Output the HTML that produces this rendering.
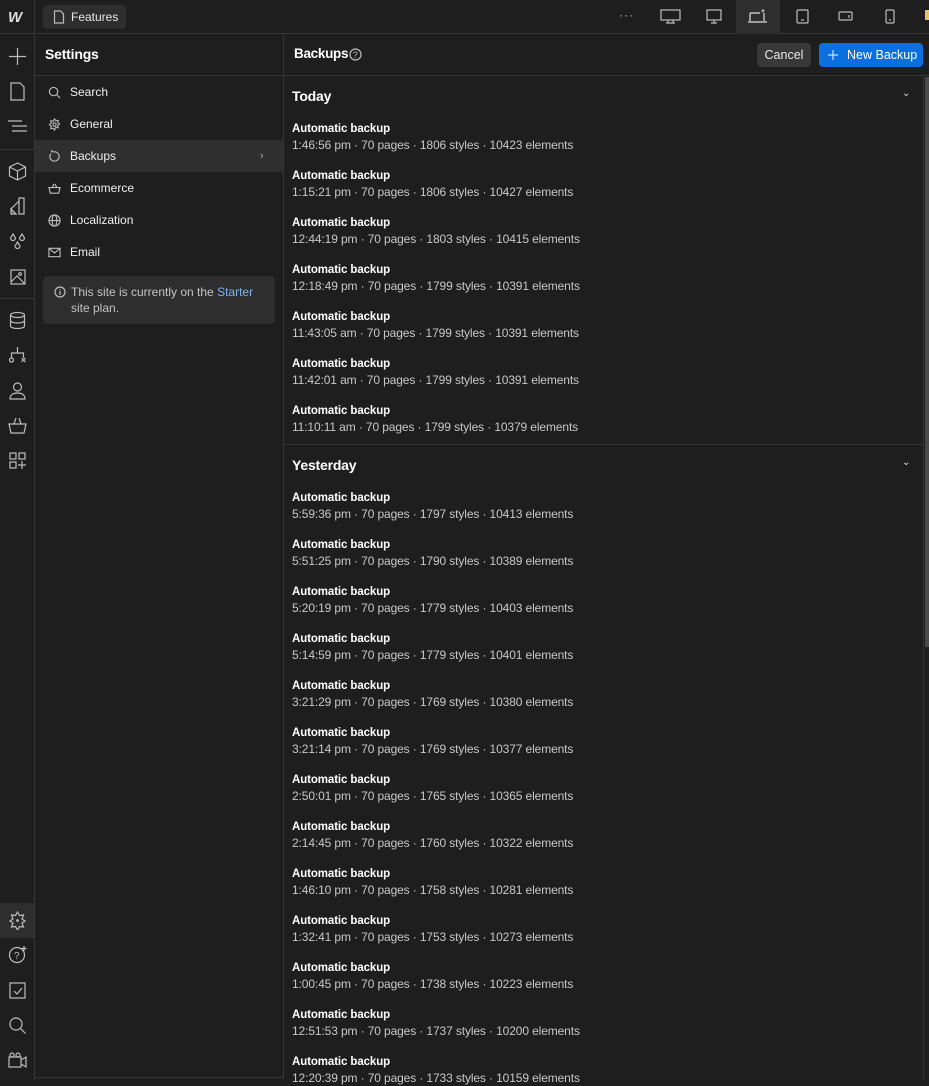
<!DOCTYPE html>
<html><head><meta charset="utf-8"><style>
*{box-sizing:border-box;margin:0;padding:0}
body{width:929px;height:1080px;background:#1e1e1e;font-family:"Liberation Sans",sans-serif;color:#f0f0f0;position:relative;overflow:hidden;font-size:12px}
.abs{position:absolute}
.top{left:0;top:0;width:929px;height:34px;background:#1e1e1e;border-bottom:1px solid #363636}
.rail{left:0;top:35px;width:35px;height:1045px;border-right:1px solid #363636}
.panel{left:35px;top:35px;width:249px;height:1045px;border-right:1px solid #363636}
.nav{position:absolute;left:0;width:248px;height:32px;display:flex;align-items:center;padding-left:13px;font-size:12px;color:#f0f0f0}
.nav svg{width:13px;height:13px;margin-right:9px}
.item{position:absolute;left:292px;line-height:16px}
.item b{display:block;font-size:11.5px;color:#fff;letter-spacing:-0.1px}
.item span{display:block;font-size:12px;color:#c8c8c8;letter-spacing:-0.12px}
svg{stroke:#bdbdbd;fill:none;stroke-width:1.2}
.ri{position:absolute;left:8px;width:19px;height:19px}
</style></head><body>
<div class="abs top">
  <div class="abs" style="left:8px;top:9px;font:italic 900 15px 'Liberation Sans';color:#ddd;letter-spacing:-2px">W</div>
  <div class="abs" style="left:43px;top:5px;width:83px;height:24px;background:#2e2e2e;border-radius:4px;font-size:12px;line-height:24px;padding-left:28px;color:#e8e8e8">Features
    <svg class="abs" style="left:10px;top:5px;width:12px;height:14px" viewBox="0 0 12 14"><path d="M1.5 1h6l3 3v9h-9z"/></svg></div>
  <div class="abs" style="left:619px;top:8px;color:#bbb;font-size:12px;letter-spacing:1px">···</div>
  <svg class="abs" style="left:660px;top:9px;width:22px;height:16px" viewBox="0 0 22 16"><rect x="1" y="1" width="19" height="10"/><path d="M8 11v3M13 11v3M6 14h9"/></svg>
  <svg class="abs" style="left:706px;top:9px;width:16px;height:16px" viewBox="0 0 16 16"><rect x="1" y="1" width="14" height="10"/><path d="M8 11v3M5 14h6"/></svg>
  <div class="abs" style="left:736px;top:0;width:44px;height:34px;background:#2e2e2e"></div>
  <svg class="abs" style="left:746px;top:8px;width:24px;height:16px" viewBox="0 0 24 16"><path d="M4 5v8M4 5h10M2 14h19M18 5v8" stroke="#ddd"/><text x="15" y="8" fill="#ddd" stroke="none" font-size="10" font-family="Liberation Sans">*</text></svg>
  <svg class="abs" style="left:796px;top:9px;width:14px;height:16px" viewBox="0 0 14 16"><rect x="1" y="1" width="11" height="13" rx="1"/><path d="M5 11h3"/></svg>
  <svg class="abs" style="left:838px;top:11px;width:16px;height:12px" viewBox="0 0 16 12"><rect x="1" y="1" width="13" height="8" rx="1"/><path d="M11 4v3"/></svg>
  <svg class="abs" style="left:885px;top:9px;width:11px;height:16px" viewBox="0 0 11 16"><rect x="1" y="1" width="8" height="13" rx="1"/><path d="M4 11h2"/></svg>
  <div class="abs" style="left:925px;top:10px;width:4px;height:10px;background:#e8c06a"></div>
</div>
<div class="abs" style="left:34px;top:0;width:1px;height:34px;background:#363636"></div>
<div class="abs rail">
  <svg class="ri" style="top:12px" viewBox="0 0 19 19"><path d="M9.5 1v17M1 9.5h17"/></svg>
  <svg class="ri" style="top:47px" viewBox="0 0 19 19"><path d="M3 1h9l4 4v13H3z"/></svg>
  <svg class="ri" style="top:82px" viewBox="0 0 19 19"><path d="M0 4h14M4 9h15M4 14h15"/></svg>
  <div class="abs" style="left:0;top:114px;width:34px;height:1px;background:#363636"></div>
  <svg class="ri" style="top:127px" viewBox="0 0 19 19"><path d="M9.5 1l8 4v9l-8 4-8-4V5zM1.5 5l8 4 8-4M9.5 9v9"/></svg>
  <svg class="ri" style="top:162px" viewBox="0 0 19 19"><path d="M11 1h5v16h-5zM11 4L3 12l5 5"/><path d="M3 12l5 5H3z" fill="#555"/></svg>
  <svg class="ri" style="top:197px" viewBox="0 0 19 19"><path d="M5 2l2.5 4a2.5 2.5 0 1 1-5 0zM14 2l2.5 4a2.5 2.5 0 1 1-5 0zM9.5 10l2.5 4a2.5 2.5 0 1 1-5 0z"/></svg>
  <svg class="ri" style="top:232px" viewBox="0 0 19 19"><rect x="3" y="3" width="14" height="14"/><path d="M3 15l6-6 8 8"/><circle cx="12" cy="7" r="1.3"/></svg>
  <div class="abs" style="left:0;top:263px;width:34px;height:1px;background:#363636"></div>
  <svg class="ri" style="top:276px" viewBox="0 0 19 19"><ellipse cx="9.5" cy="4" rx="7" ry="2.5"/><path d="M2.5 4v11c0 1.5 3 2.5 7 2.5s7-1 7-2.5V4M2.5 9.5c0 1.5 3 2.5 7 2.5s7-1 7-2.5"/></svg>
  <svg class="ri" style="top:311px" viewBox="0 0 19 19"><path d="M9.5 1v6M3.5 12V7h12v5M13.5 12l4 4M17.5 12l-4 4"/><circle cx="3.5" cy="14" r="2"/></svg>
  <svg class="ri" style="top:346px" viewBox="0 0 19 19"><circle cx="9.5" cy="6" r="4"/><path d="M2 18c0-4 3-6 7.5-6s7.5 2 7.5 6z"/></svg>
  <svg class="ri" style="top:381px" viewBox="0 0 19 19"><path d="M1 8h17l-2 9H3zM6 8l2-6M13 8l-2-6"/></svg>
  <svg class="ri" style="top:416px" viewBox="0 0 19 19"><rect x="2" y="2" width="6" height="6"/><rect x="11" y="2" width="6" height="6"/><rect x="2" y="11" width="6" height="6"/><path d="M14 10v8M10 14h8"/></svg>
  <div class="abs" style="left:0;top:868px;width:34px;height:35px;background:#2e2e2e"></div>
  <svg class="ri" style="top:876px" viewBox="0 0 19 19"><path d="M9.5 1l2 3.5 4-.5-1.5 4 3 2-3 2 1.5 4-4-.5-2 3.5-2-3.5-4 .5 1.5-4-3-2 3-2L3.5 4l4 .5z"/><circle cx="9.5" cy="9.5" r=".8" fill="#bbb"/></svg>
  <svg class="ri" style="top:910px" viewBox="0 0 19 19"><circle cx="9" cy="10" r="7.5"/><text x="6" y="14" font-size="10" fill="#bbb" stroke="none" font-family="Liberation Sans">?</text><path d="M16 1v5M13.5 3.5h5"/></svg>
  <svg class="ri" style="top:946px" viewBox="0 0 19 19"><rect x="2" y="2" width="15" height="15"/><path d="M6 10l3 3 5-6"/></svg>
  <svg class="ri" style="top:981px" viewBox="0 0 19 19"><circle cx="8" cy="8" r="6"/><path d="M12.5 12.5l5 5"/></svg>
  <svg class="ri" style="top:1016px" viewBox="0 0 19 19"><rect x="1" y="6" width="12" height="10"/><path d="M13 9l5-3v10l-5-3"/><circle cx="4" cy="4" r="2"/><circle cx="10" cy="4" r="2"/></svg>
</div>
<div class="abs panel">
  <div class="abs" style="left:10px;top:11px;font-size:14px;font-weight:bold;color:#fff;letter-spacing:-0.2px">Settings</div>
  <div class="abs" style="left:0;top:40px;width:248px;height:1px;background:#363636"></div>
  <div class="nav" style="top:41px"><svg viewBox="0 0 14 14"><circle cx="6" cy="6" r="4.5"/><path d="M9.5 9.5l3.5 3.5"/></svg>Search</div>
  <div class="nav" style="top:73px"><svg viewBox="0 0 14 14"><path d="M7 1l1.5 2 2.5-.5-.5 2.5 2 1.5-2 1.5.5 2.5-2.5-.5L7 13l-1.5-2-2.5.5.5-2.5L1.5 7l2-1.5L3 3l2.5.5z"/><circle cx="7" cy="7" r="1.8"/></svg>General</div>
  <div class="nav" style="top:105px;background:#2f2f2f"><svg viewBox="0 0 14 14"><path d="M3 4a5 5 0 1 0 4-2H4M4 0v2.5"/></svg>Backups<span style="position:absolute;left:225px;color:#aaa;font-size:11px">›</span></div>
  <div class="nav" style="top:137px"><svg viewBox="0 0 14 14"><path d="M1 6h12l-1.5 6h-9zM4.5 6l2-4M9.5 6l-2-4"/></svg>Ecommerce</div>
  <div class="nav" style="top:169px"><svg viewBox="0 0 14 14"><circle cx="7" cy="7" r="6"/><ellipse cx="7" cy="7" rx="2.5" ry="6"/><path d="M1 7h12"/></svg>Localization</div>
  <div class="nav" style="top:201px"><svg viewBox="0 0 14 14"><rect x="1" y="2.5" width="12" height="9"/><path d="M1 2.5l6 5 6-5"/></svg>Email</div>
  <div class="abs" style="left:8px;top:241px;width:232px;height:48px;background:#2e2e2e;border-radius:5px;padding:8px 10px 0 28px;font-size:12px;line-height:16px;color:#c4c4c4">This site is currently on the <span style="color:#7fb2f0">Starter</span> site plan.
    <svg class="abs" style="left:11px;top:10px;width:12px;height:12px" viewBox="0 0 12 12"><circle cx="6" cy="6" r="5"/><path d="M6 5v4M6 3v.8"/></svg></div>
  <div class="abs" style="left:0;top:1042px;width:248px;height:1px;background:#363636"></div>
</div>
<div class="abs" style="left:294px;top:46px;font-size:13.5px;font-weight:bold;color:#fff;letter-spacing:-0.3px">Backups</div>
<svg class="abs" style="left:349px;top:48px;width:13px;height:13px" viewBox="0 0 13 13"><circle cx="6.5" cy="6.5" r="5.5"/><text x="3.8" y="10" font-size="9" fill="#bbb" stroke="none" font-family="Liberation Sans">?</text></svg>
<div class="abs" style="left:757px;top:43px;width:54px;height:24px;background:#383838;border-radius:4px;text-align:center;line-height:24px;font-size:12.5px;color:#e8e8e8">Cancel</div>
<div class="abs" style="left:819px;top:43px;width:104px;height:24px;background:#0a6fe0;border-radius:4px;line-height:24px;font-size:12.5px;color:#fff;padding-left:28px">New Backup
  <svg class="abs" style="left:9px;top:7px;width:10px;height:10px;stroke:#cfe2ff" viewBox="0 0 10 10"><path d="M5 0v10M0 5h10"/></svg></div>
<div class="abs" style="left:284px;top:75px;width:645px;height:1px;background:#363636"></div>
<div class="abs" style="left:923px;top:76px;width:1px;height:1004px;background:#333"></div>
<div class="abs" style="left:925px;top:77px;width:4px;height:570px;background:#4a4a4a"></div>
<div class="abs" style="left:292px;top:88px;font-size:14px;font-weight:bold;color:#fff;letter-spacing:-0.2px">Today</div>
<div class="abs" style="left:902px;top:88px;color:#ddd;font-size:10px">⌄</div>
<div class="abs" style="left:284px;top:444px;width:639px;height:1px;background:#363636"></div>
<div class="abs" style="left:292px;top:457px;font-size:14px;font-weight:bold;color:#fff;letter-spacing:-0.2px">Yesterday</div>
<div class="abs" style="left:902px;top:457px;color:#ddd;font-size:10px">⌄</div>

<div class="item" style="top:121px"><b>Automatic backup</b><span>1:46:56 pm · 70 pages · 1806 styles · 10423 elements</span></div>
<div class="item" style="top:168px"><b>Automatic backup</b><span>1:15:21 pm · 70 pages · 1806 styles · 10427 elements</span></div>
<div class="item" style="top:215px"><b>Automatic backup</b><span>12:44:19 pm · 70 pages · 1803 styles · 10415 elements</span></div>
<div class="item" style="top:262px"><b>Automatic backup</b><span>12:18:49 pm · 70 pages · 1799 styles · 10391 elements</span></div>
<div class="item" style="top:309px"><b>Automatic backup</b><span>11:43:05 am · 70 pages · 1799 styles · 10391 elements</span></div>
<div class="item" style="top:356px"><b>Automatic backup</b><span>11:42:01 am · 70 pages · 1799 styles · 10391 elements</span></div>
<div class="item" style="top:403px"><b>Automatic backup</b><span>11:10:11 am · 70 pages · 1799 styles · 10379 elements</span></div>

<div class="item" style="top:490px"><b>Automatic backup</b><span>5:59:36 pm · 70 pages · 1797 styles · 10413 elements</span></div>
<div class="item" style="top:537px"><b>Automatic backup</b><span>5:51:25 pm · 70 pages · 1790 styles · 10389 elements</span></div>
<div class="item" style="top:584px"><b>Automatic backup</b><span>5:20:19 pm · 70 pages · 1779 styles · 10403 elements</span></div>
<div class="item" style="top:631px"><b>Automatic backup</b><span>5:14:59 pm · 70 pages · 1779 styles · 10401 elements</span></div>
<div class="item" style="top:678px"><b>Automatic backup</b><span>3:21:29 pm · 70 pages · 1769 styles · 10380 elements</span></div>
<div class="item" style="top:725px"><b>Automatic backup</b><span>3:21:14 pm · 70 pages · 1769 styles · 10377 elements</span></div>
<div class="item" style="top:772px"><b>Automatic backup</b><span>2:50:01 pm · 70 pages · 1765 styles · 10365 elements</span></div>
<div class="item" style="top:819px"><b>Automatic backup</b><span>2:14:45 pm · 70 pages · 1760 styles · 10322 elements</span></div>
<div class="item" style="top:866px"><b>Automatic backup</b><span>1:46:10 pm · 70 pages · 1758 styles · 10281 elements</span></div>
<div class="item" style="top:913px"><b>Automatic backup</b><span>1:32:41 pm · 70 pages · 1753 styles · 10273 elements</span></div>
<div class="item" style="top:960px"><b>Automatic backup</b><span>1:00:45 pm · 70 pages · 1738 styles · 10223 elements</span></div>
<div class="item" style="top:1007px"><b>Automatic backup</b><span>12:51:53 pm · 70 pages · 1737 styles · 10200 elements</span></div>
<div class="item" style="top:1054px"><b>Automatic backup</b><span>12:20:39 pm · 70 pages · 1733 styles · 10159 elements</span></div>
</body></html>
